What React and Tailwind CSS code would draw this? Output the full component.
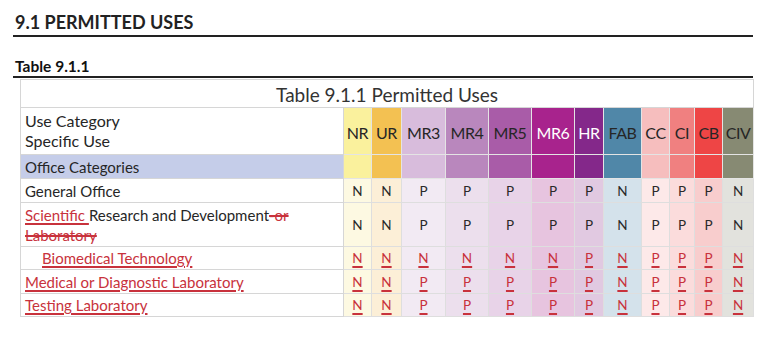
const columns = [
  { label: 'NR', w: 'w-[28px]', head: 'bg-[#faf19d]', body: 'bg-[#fdf9e2]', text: 'text-[#262626]' },
  { label: 'UR', w: 'w-[30px]', head: 'bg-[#f3c152]', body: 'bg-[#fcefd7]', text: 'text-[#262626]' },
  { label: 'MR3', w: 'w-[44px]', head: 'bg-[#d8bcdc]', body: 'bg-[#f2eaf3]', text: 'text-[#262626]' },
  { label: 'MR4', w: 'w-[43px]', head: 'bg-[#b987bd]', body: 'bg-[#ecdfed]', text: 'text-[#262626]' },
  { label: 'MR5', w: 'w-[43px]', head: 'bg-[#a95ca8]', body: 'bg-[#e8d3e8]', text: 'text-[#262626]' },
  { label: 'MR6', w: 'w-[43px]', head: 'bg-[#a8238d]', body: 'bg-[#e7c4df]', text: 'text-white' },
  { label: 'HR', w: 'w-[29px]', head: 'bg-[#84288a]', body: 'bg-[#e1c9e1]', text: 'text-white' },
  { label: 'FAB', w: 'w-[38px]', head: 'bg-[#5087a8]', body: 'bg-[#d4e2eb]', text: 'text-[#262626]' },
  { label: 'CC', w: 'w-[28px]', head: 'bg-[#f6bebe]', body: 'bg-[#fde9e9]', text: 'text-[#262626]' },
  { label: 'CI', w: 'w-[25px]', head: 'bg-[#f08080]', body: 'bg-[#fbdcdc]', text: 'text-[#262626]' },
  { label: 'CB', w: 'w-[28px]', head: 'bg-[#ee4545]', body: 'bg-[#f8cdcd]', text: 'text-[#262626]' },
  { label: 'CIV', w: 'w-[31px]', head: 'bg-[#878a73]', body: 'bg-[#e2e2dd]', text: 'text-[#262626]' },
];

const base = 'NNPPPPPNPPPN';
const bio = 'NNNNNNPNPPPN';

const red = 'text-[#c8323c] underline decoration-[#c8323c] decoration-[1.5px] underline-offset-2';
const struck = 'text-[#c8323c] line-through decoration-[#c8323c] decoration-[1.5px]';

const rows = [
  { h: 'h-[24px]', label: <span>General Office</span>, values: base, added: false },
  {
    h: 'h-[44px]',
    label: (
      <>
        <span className={red}>Scientific </span>Research and Development
        <span className={struck}>-or</span>
        <br />
        <span className={struck}>Laboratory</span>
      </>
    ),
    values: base,
    added: false,
  },
  { h: 'h-[23px]', label: <span className={`ml-[17px] ${red}`}>Biomedical Technology</span>, values: bio, added: true },
  { h: 'h-[24px]', label: <span className={red}>Medical or Diagnostic Laboratory</span>, values: base, added: true },
  { h: 'h-[23px]', label: <span className={red}>Testing Laboratory</span>, values: base, added: true },
];

export default function App() {
  return (
    <div className="w-[774px] h-[338px] bg-white font-['Lato',sans-serif] text-[#262626] pl-[13px] pt-[11px]">
      <div className="w-[740px]">
        <h1 className="pl-[2px] text-[18px] font-bold leading-[23px] text-[#222]">9.1 PERMITTED USES</h1>
        <div className="h-[2px] bg-[#222] mt-[1px]" />
        <h2 className="pl-[2px] mt-[20px] text-[15.5px] font-bold leading-[18px] text-[#111]">Table 9.1.1</h2>
        <div className="h-[2px] bg-[#222] mt-[1px]" />
      </div>

      <table className="ml-[7px] mt-[1px] w-[733px] table-fixed border-collapse border border-[#d6d6d6]">
        <colgroup>
          <col className="w-[323px]" />
          {columns.map((c) => (
            <col key={c.label} className={c.w} />
          ))}
        </colgroup>
        <tbody>
          <tr className="h-[28px]">
            <td colSpan={13} className="text-center text-[19px] leading-[22px] text-[#333] border border-[#d6d6d6] pt-[3px]">
              Table 9.1.1 Permitted Uses
            </td>
          </tr>
          <tr className="h-[47px]">
            <td className="border border-[#d6d6d6] px-[4px] text-[16px] leading-[20px] align-middle">
              <div>Use Category</div>
              <div>Specific Use</div>
            </td>
            {columns.map((c) => (
              <td
                key={c.label}
                className={`${c.head} ${c.text} border-x border-[#e4e4e4] text-center text-[16px] leading-[18px] pt-[4px] tracking-[-0.4px]`}
              >
                {c.label}
              </td>
            ))}
          </tr>
          <tr className="h-[24px]">
            <td className="bg-[#c5cde9] border border-[#d6d6d6] px-[4px] text-[15px] leading-[18px]">Office Categories</td>
            {columns.map((c) => (
              <td key={c.label} className={`${c.head} border border-[#e4e4e4]`} />
            ))}
          </tr>
          {rows.map((r, i) => (
            <tr key={i} className={r.h}>
              <td className="border border-[#d6d6d6] px-[4px] text-[15px] leading-[20px] align-middle">{r.label}</td>
              {columns.map((c, j) => (
                <td
                  key={c.label}
                  className={`${c.body} border border-[#dedede] text-center text-[13.5px] leading-[16px]`}
                >
                  {r.added ? (
                    <span className="text-[#c8323c] underline decoration-[#c8323c] decoration-2 underline-offset-[3px]">
                      {r.values[j]}
                    </span>
                  ) : (
                    <span className="text-[#2a2a2a]">{r.values[j]}</span>
                  )}
                </td>
              ))}
            </tr>
          ))}
        </tbody>
      </table>
    </div>
  );
}
